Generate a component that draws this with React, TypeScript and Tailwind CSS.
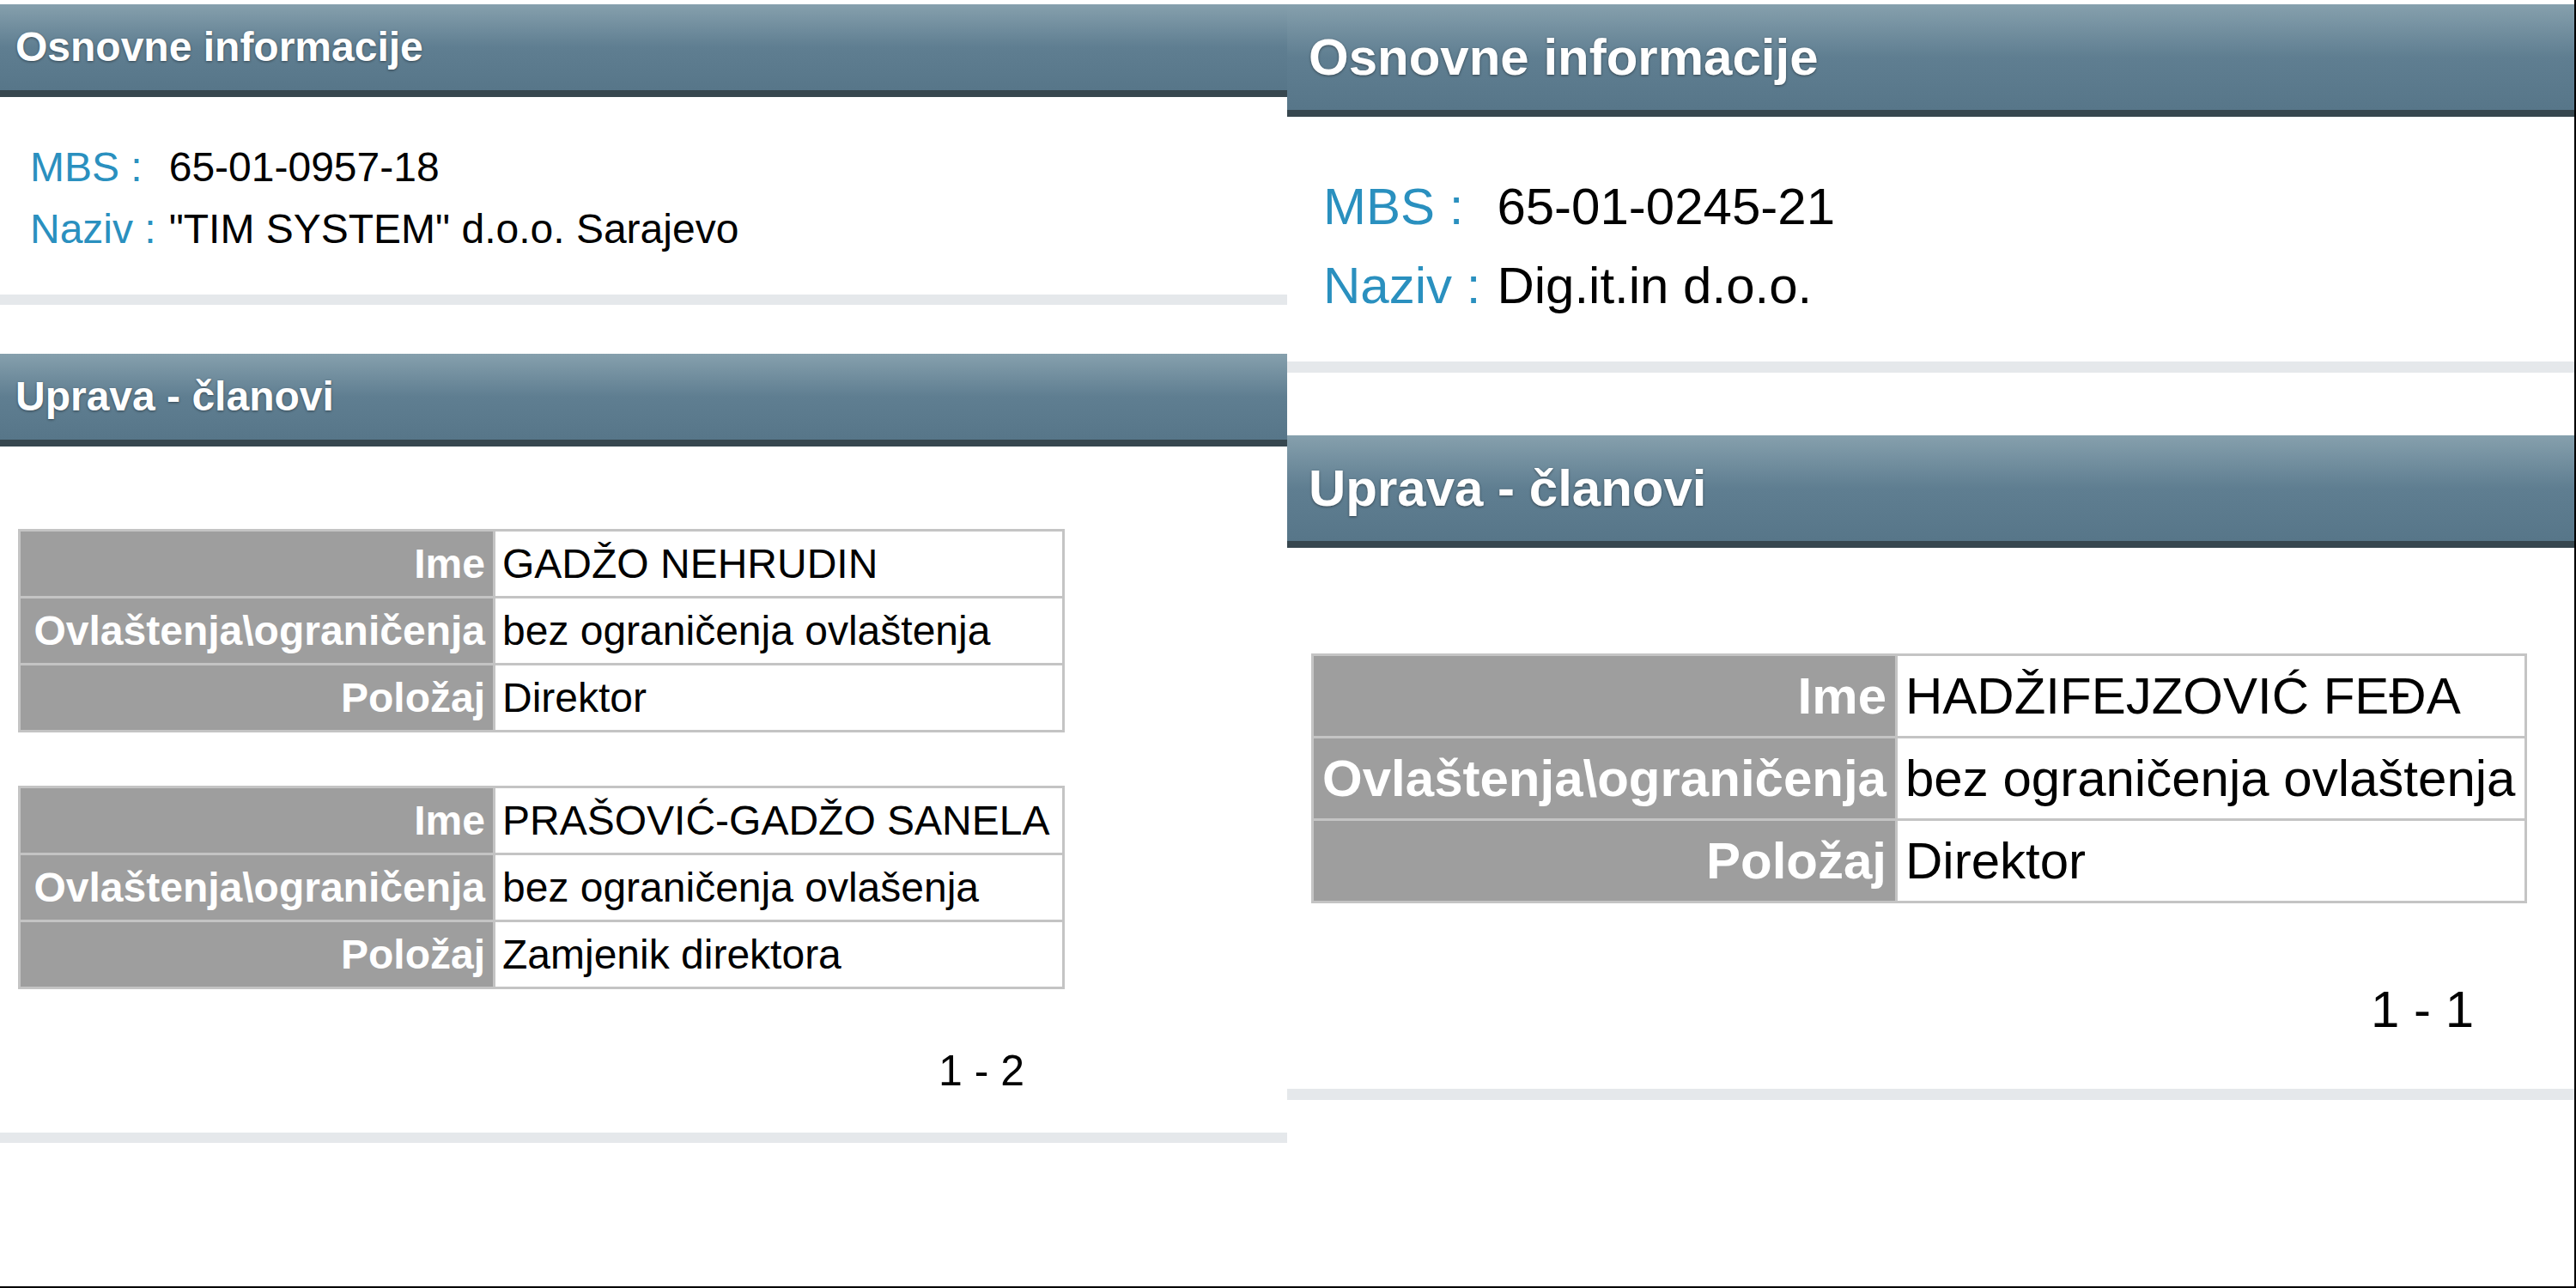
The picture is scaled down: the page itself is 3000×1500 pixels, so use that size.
const font = "font-['Liberation_Sans',Arial,Helvetica,sans-serif]";

type Row = { label: string; value: string };

const leftMembers: Row[][] = [
  [
    { label: 'Ime', value: 'GADŽO NEHRUDIN' },
    { label: 'Ovlaštenja\\ograničenja', value: 'bez ograničenja ovlaštenja' },
    { label: 'Položaj', value: 'Direktor' },
  ],
  [
    { label: 'Ime', value: 'PRAŠOVIĆ-GADŽO SANELA' },
    { label: 'Ovlaštenja\\ograničenja', value: 'bez ograničenja ovlašenja' },
    { label: 'Položaj', value: 'Zamjenik direktora' },
  ],
];

const rightMembers: Row[][] = [
  [
    { label: 'Ime', value: 'HADŽIFEJZOVIĆ FEĐA' },
    { label: 'Ovlaštenja\\ograničenja', value: 'bez ograničenja ovlaštenja' },
    { label: 'Položaj', value: 'Direktor' },
  ],
];

// class sets for the small (left) and zoomed (right) screenshot
const sizes = {
  sm: {
    panel: 'w-[1499px] pt-[5px]',
    header: 'h-[100px] pl-[18px] text-[48px]',
    info: 'pt-[46px] pb-[40px] pl-[35px] text-[48px] leading-[72px] gap-x-[15px]',
    sep: 'h-[12px]',
    spacer: 'h-[57px]',
    tables: 'pt-[96px] pl-[21px] gap-[62px]',
    table: 'w-[1219px] text-[48px]',
    labelCell: 'w-[553px] h-[78px] px-[9px]',
    valueCell: 'h-[78px] px-[8px]',
    pager: 'w-[1219px] pr-[47px] mt-[5px] mb-[43px] text-[50px] leading-[57px]',
  },
  lg: {
    panel: 'flex-1 pt-[5px]',
    header: 'h-[123px] pl-[25px] text-[60px]',
    info: 'pt-[59px] pb-[42px] pl-[42px] text-[60px] leading-[92px] gap-x-[19px]',
    sep: 'h-[13px]',
    spacer: 'h-[73px]',
    tables: 'pt-[123px] pl-[28px] gap-[70px]',
    table: 'w-[1416px] text-[60px]',
    labelCell: 'w-[680px] h-[96px] px-[10px]',
    valueCell: 'h-[96px] px-[9px]',
    pager: 'w-[1416px] pr-[62px] mt-[19px] mb-[58px] text-[60px] leading-[69px]',
  },
};

type Size = keyof typeof sizes;

function Header({ title, size }: { title: string; size: Size }) {
  const s = sizes[size];
  return (
    <div>
      <div
        className={`flex items-center bg-linear-to-b from-[#86a0ad] via-[#5f7e91] to-[#577689] font-bold text-white [text-shadow:0_1px_3px_rgba(0,0,0,0.45)] ${s.header}`}
      >
        {title}
      </div>
      <div className="h-[8px] bg-[#37474f]" />
    </div>
  );
}

function MemberTable({ rows, size }: { rows: Row[]; size: Size }) {
  const s = sizes[size];
  return (
    <table className={`border-collapse border-[3px] border-[#c4c4c4] ${s.table}`}>
      <tbody>
        {rows.map((r) => (
          <tr key={r.label}>
            <td
              className={`border-[3px] border-[#c4c4c4] bg-[#9e9e9e] text-right align-middle font-bold whitespace-nowrap text-white ${s.labelCell}`}
            >
              {r.label}
            </td>
            <td
              className={`border-[3px] border-[#c4c4c4] bg-white align-middle whitespace-nowrap text-black ${s.valueCell}`}
            >
              {r.value}
            </td>
          </tr>
        ))}
      </tbody>
    </table>
  );
}

function Panel({
  size,
  mbs,
  naziv,
  members,
  pages,
}: {
  size: Size;
  mbs: string;
  naziv: string;
  members: Row[][];
  pages: string;
}) {
  const s = sizes[size];
  return (
    <div className={`flex flex-col bg-white ${s.panel}`}>
      <Header title="Osnovne informacije" size={size} />
      <div className={`grid grid-cols-[auto_1fr] ${s.info}`}>
        <span className="text-[#2a90bf]">MBS :</span>
        <span className="text-black">{mbs}</span>
        <span className="text-[#2a90bf]">Naziv :</span>
        <span className="text-black">{naziv}</span>
      </div>
      <div className={`bg-[#e5e8eb] ${s.sep}`} />
      <div className={s.spacer} />
      <Header title="Uprava - članovi" size={size} />
      <div className={`flex flex-col ${s.tables}`}>
        {members.map((rows, i) => (
          <MemberTable key={i} rows={rows} size={size} />
        ))}
        <div className={`flex justify-end text-black ${s.pager}`}>{pages}</div>
      </div>
      <div className={`bg-[#e5e8eb] ${s.sep}`} />
    </div>
  );
}

export default function App() {
  return (
    <div className={`flex h-[1500px] w-[3000px] overflow-hidden border-r-2 border-b-2 border-black bg-white ${font}`}>
      <Panel
        size="sm"
        mbs="65-01-0957-18"
        naziv={'"TIM SYSTEM" d.o.o. Sarajevo'}
        members={leftMembers}
        pages="1 - 2"
      />
      <Panel size="lg" mbs="65-01-0245-21" naziv="Dig.it.in d.o.o." members={rightMembers} pages="1 - 1" />
    </div>
  );
}
